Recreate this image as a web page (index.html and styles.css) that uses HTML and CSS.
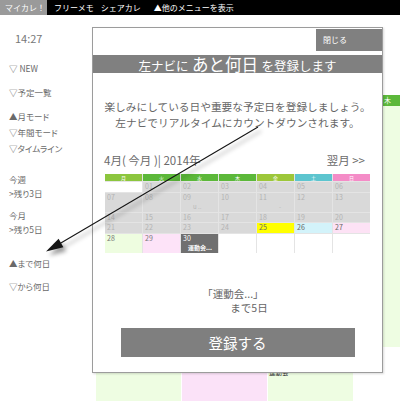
FILE: index.html
```html
<!DOCTYPE html>
<html lang="ja">
<head>
<meta charset="utf-8">
<title>マイカレ</title>
<link rel="stylesheet" href="styles.css">
</head>
<body>
<div class="topbar">
  <span class="tab tab-active">マイカレ！</span>
  <span class="tab">フリーメモ</span>
  <span class="tab">シェアカレ</span>
  <span class="tab tab-more">▲他のメニューを表示</span>
</div>
<div class="main">
  <nav class="sidenav">
    <div class="clock">14:27</div>
    <div class="nav-list">
      <div class="nav-item">▽ NEW</div>
      <div class="nav-item">▽予定一覧</div>
    </div>
    <div class="nav-modes">
      <div class="nav-item">▲月モード</div>
      <div class="nav-item">▽年間モード</div>
      <div class="nav-item">▽タイムライン</div>
    </div>
    <div class="nav-counts">
      <div class="count-group">
        <div class="count-line">今週</div>
        <div class="count-line">&gt;残り3日</div>
      </div>
      <div class="count-group">
        <div class="count-line">今月</div>
        <div class="count-line">&gt;残り5日</div>
      </div>
    </div>
    <div class="nav-days">
      <div class="nav-item">▲まで何日</div>
      <div class="nav-item">▽から何日</div>
    </div>
  </nav>
  <div class="bgcal">
    <div class="bg-head">
      <div class="bg-hcell"></div>
      <div class="bg-hcell"></div>
      <div class="bg-hcell"></div>
      <div class="bg-hcell bg-thu">木</div>
    </div>
    <div class="bg-week">
      <div class="bg-cell"></div>
      <div class="bg-cell"></div>
      <div class="bg-cell"></div>
      <div class="bg-cell bg-green"></div>
    </div>
    <div class="bg-week bg-next">
      <div class="bg-cell bg-green"></div>
      <div class="bg-cell bg-pink"></div>
      <div class="bg-cell bg-green"><span class="bg-event">運動会</span></div>
      <div class="bg-cell"></div>
    </div>
  </div>
</div>

<div class="modal">
  <div class="modal-head">
    <div class="close-btn">閉じる</div>
  </div>
  <div class="title-band">
    <span class="title-small">左ナビに</span>
    <span class="title-big">あと何日</span>
    <span class="title-small">を登録します</span>
  </div>
  <div class="desc">
    <div>楽しみにしている日や重要な予定日を登録しましょう。</div>
    <div>左ナビでリアルタイムにカウントダウンされます。</div>
  </div>
  <div class="month-nav">
    <span>4月( 今月 )| 2014年</span>
    <span>翌月 &gt;&gt;</span>
  </div>
  <div class="cal">
    <div class="cal-h h-mon">月</div>
    <div class="cal-h h-mid">火</div>
    <div class="cal-h h-mid">水</div>
    <div class="cal-h h-mid">木</div>
    <div class="cal-h h-fri">金</div>
    <div class="cal-h h-sat">土</div>
    <div class="cal-h h-sun">日</div>

    <div class="cd"></div>
    <div class="cd past">01</div>
    <div class="cd past">02</div>
    <div class="cd past">03</div>
    <div class="cd past">04</div>
    <div class="cd past">05</div>
    <div class="cd past">06</div>

    <div class="cd past">07</div>
    <div class="cd past">08</div>
    <div class="cd past">09<span class="faint-ev">u ..</span></div>
    <div class="cd past">10</div>
    <div class="cd past">11<span class="faint-ev faint-dash">-</span></div>
    <div class="cd past">12</div>
    <div class="cd past">13</div>

    <div class="cd past">14</div>
    <div class="cd past">15</div>
    <div class="cd past">16</div>
    <div class="cd past">17</div>
    <div class="cd past">18</div>
    <div class="cd past">19</div>
    <div class="cd past">20</div>

    <div class="cd past">21</div>
    <div class="cd past">22</div>
    <div class="cd past">23</div>
    <div class="cd past">24</div>
    <div class="cd today">25</div>
    <div class="cd sat">26</div>
    <div class="cd sun">27</div>

    <div class="cd mon-l">28</div>
    <div class="cd holiday">29</div>
    <div class="cd selected">30<span class="sel-ev">運動会...</span></div>
    <div class="cd"></div>
    <div class="cd"></div>
    <div class="cd"></div>
    <div class="cd"></div>
  </div>
  <div class="count">
    <div class="count-l1">「運動会...」</div>
    <div class="count-l2">まで5日</div>
  </div>
  <div class="register-btn">登録する</div>
</div>

<svg class="arrow" width="400" height="401" viewBox="0 0 400 401">
  <g class="arrow-shape">
    <line x1="258" y1="127" x2="60" y2="243.5" stroke="#151515" stroke-width="1.1"/>
    <polygon points="46,251.5 63.4,247.2 58.6,238.8" fill="#151515"/>
  </g>
</svg>
</body>
</html>
```

FILE: styles.css
```css
* {
  box-sizing: border-box;
  margin: 0;
  padding: 0;
}

html, body {
  width: 400px;
  height: 401px;
  overflow: hidden;
}

body {
  position: relative;
  background: #fff;
  color: #666;
  font-family: "Noto Sans CJK JP", "Noto Sans", sans-serif;
}

/* top bar */
.topbar {
  display: flex;
  height: 15px;
  background: #000;
  color: #fff;
  font-size: 8px;
  line-height: 15px;
}

.tab {
  height: 15px;
  white-space: nowrap;
}

.tab + .tab {
  margin-left: 7px;
}

.tab-active {
  background: #9a9a9a;
  padding: 0 2px 0 5px;
}

.tab-more {
  margin-left: 13px !important;
}

/* main */
.main {
  display: flex;
  height: 386px;
}

.sidenav {
  flex: none;
  width: 92px;
  padding: 15px 0 0 9px;
  font-size: 8.5px;
  color: #6a6a6a;
  font-feature-settings: "palt";
}

.clock {
  padding-left: 6px;
  font-size: 11px;
  line-height: 16px;
  color: #777;
}

.nav-item {
  line-height: 16px;
  white-space: nowrap;
}

.nav-list {
  margin-top: 14px;
  display: flex;
  flex-direction: column;
  gap: 8px;
}

.nav-modes {
  margin-top: 8px;
}

.nav-counts {
  margin-top: 16px;
  display: flex;
  flex-direction: column;
  gap: 8px;
}

.count-line {
  line-height: 14px;
}

.nav-days {
  margin-top: 19px;
  display: flex;
  flex-direction: column;
  gap: 7px;
}

/* background calendar (behind modal) */
.bgcal {
  flex: none;
  padding: 80px 0 0 4px;
}

.bg-head,
.bg-week {
  display: grid;
  grid-template-columns: 85px 85px 85px 46px;
  column-gap: 1px;
}

.bg-hcell {
  height: 11px;
  background: #5cb83a;
  color: #fff;
  font-size: 7px;
  line-height: 11px;
}

.bg-thu {
  padding-left: 30px;
}

.bg-week {
  height: 241px;
}

.bg-next {
  margin-top: 3px;
  height: 60px;
}

.bg-cell {
  background: #fff;
}

.bg-green {
  background: #eefde2;
}

.bg-pink {
  background: #fbe2f8;
}

.bg-event {
  display: block;
  padding: 18px 0 0 1px;
  font-size: 6.5px;
  line-height: 8px;
  color: #333;
}

/* modal */
.modal {
  position: absolute;
  left: 92px;
  top: 27px;
  width: 291px;
  height: 346px;
  border: 1px solid #9c9c9c;
  background: #fff;
  box-shadow: 1px 1px 2px rgba(0, 0, 0, 0.15);
}

.modal-head {
  display: flex;
  justify-content: flex-end;
  padding-top: 1px;
}

.close-btn {
  width: 66px;
  height: 22px;
  padding-left: 7px;
  background: #808080;
  color: #fff;
  font-size: 8px;
  line-height: 22px;
}

.title-band {
  margin-top: 4px;
  height: 18px;
  background: #808080;
  color: #fff;
  text-align: center;
  line-height: 18px;
  white-space: nowrap;
}

.title-small {
  font-size: 12.5px;
}

.title-big {
  font-size: 16.5px;
}

.desc {
  margin-top: 26px;
  text-align: center;
  font-size: 10.7px;
  line-height: 16px;
  color: #666;
  white-space: nowrap;
}

.month-nav {
  margin-top: 22px;
  padding: 0 17px 0 11px;
  display: flex;
  justify-content: space-between;
  font-size: 11.5px;
  line-height: 14px;
  color: #6a6a6a;
}

.cal {
  margin: 7px 12px 0;
  display: grid;
  grid-template-columns: repeat(7, 1fr);
  grid-template-rows: 7px 10px 19px 9px 10px 19px;
  gap: 1px;
  background: #e4e4e4;
}

.cal-h {
  color: #fff;
  font-size: 5px;
  line-height: 7px;
  text-align: center;
}

.h-mon { background: #8cc63e; }
.h-mid { background: #5cb83a; }
.h-fri { background: #9dc73a; }
.h-sat { background: #5dc5cf; }
.h-sun { background: #f48cc7; }

.cd {
  background: #fff;
  padding-left: 2px;
  font-size: 7px;
  line-height: 9px;
  color: #777;
  overflow: hidden;
}

.past {
  background: #d9d9d9;
  color: #b3b3b3;
}

.today { background: #ffff00; color: #666; }
.sat { background: #d3f3fa; color: #666; }
.sun { background: #fde2f5; color: #666; }
.mon-l { background: #eefde0; }
.holiday { background: #fde3f8; }

.selected {
  background: #707070;
  color: #fff;
}

.sel-ev {
  display: block;
  padding-left: 5px;
  font-size: 6px;
  line-height: 9px;
  font-weight: bold;
  white-space: nowrap;
}

.faint-ev {
  display: block;
  padding-left: 10px;
  font-size: 6px;
  line-height: 9px;
  color: #b8b8b8;
}

.faint-dash {
  padding-left: 20px;
}

.count {
  margin-top: 34px;
  text-align: center;
  font-size: 10.5px;
  line-height: 14px;
  color: #666;
}

.count-l1 {
  padding-right: 9px;
}

.count-l2 {
  padding-left: 23px;
}

.register-btn {
  margin: 13px auto 0;
  width: 234px;
  height: 29px;
  background: #7f7f7f;
  color: #fff;
  text-align: center;
  font-size: 14.5px;
  line-height: 29px;
}

/* annotation arrow */
.arrow {
  position: absolute;
  left: 0;
  top: 0;
  pointer-events: none;
}

.arrow-shape {
  filter: drop-shadow(3px 4px 2px rgba(0, 0, 0, 0.4));
}
```
